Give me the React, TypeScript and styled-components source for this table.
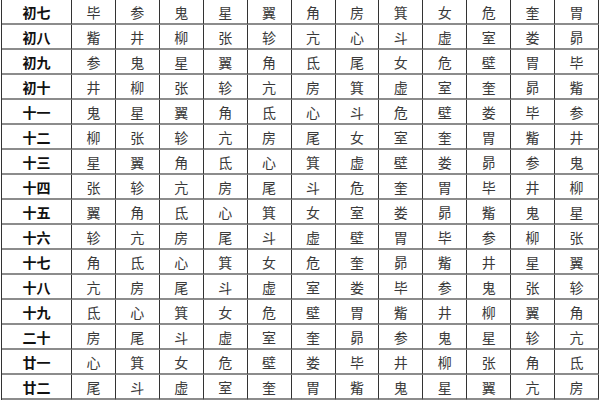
import styled, { createGlobalStyle } from "styled-components";

const GlobalStyle = createGlobalStyle`
  html, body {
    margin: 0;
    padding: 0;
    background: #ffffff;
    overflow: hidden;
  }
`;

const Table = styled.div`
  box-sizing: border-box;
  width: 598px;
  margin-left: 1px;
  border-left: 1px solid #333;
  display: grid;
  grid-template-columns: 70px repeat(12, 1fr);
  grid-auto-rows: 25px;
  font-family: "Noto Sans CJK SC", "DejaVu Sans", sans-serif;
  font-size: 14px;
`;

const Cell = styled.div<{ $label?: boolean }>`
  box-sizing: border-box;
  display: flex;
  align-items: center;
  justify-content: center;
  border-right: 1px solid #333;
  border-bottom: 2px solid #8c8c8c;
  color: ${(p) => (p.$label ? "#111" : "#3a3a3a")};
  font-weight: ${(p) => (p.$label ? 700 : 400)};
  line-height: 1;
`;

const rows: [string, string][] = [
  ["初七", "毕参鬼星翼角房箕女危奎胃"],
  ["初八", "觜井柳张轸亢心斗虚室娄昴"],
  ["初九", "参鬼星翼角氐尾女危壁胃毕"],
  ["初十", "井柳张轸亢房箕虚室奎昴觜"],
  ["十一", "鬼星翼角氐心斗危壁娄毕参"],
  ["十二", "柳张轸亢房尾女室奎胃觜井"],
  ["十三", "星翼角氐心箕虚壁娄昴参鬼"],
  ["十四", "张轸亢房尾斗危奎胃毕井柳"],
  ["十五", "翼角氐心箕女室娄昴觜鬼星"],
  ["十六", "轸亢房尾斗虚壁胃毕参柳张"],
  ["十七", "角氐心箕女危奎昴觜井星翼"],
  ["十八", "亢房尾斗虚室娄毕参鬼张轸"],
  ["十九", "氐心箕女危壁胃觜井柳翼角"],
  ["二十", "房尾斗虚室奎昴参鬼星轸亢"],
  ["廿一", "心箕女危壁娄毕井柳张角氐"],
  ["廿二", "尾斗虚室奎胃觜鬼星翼亢房"],
];

export default function App() {
  return (
    <>
      <GlobalStyle />
      <Table>
        {rows.map(([day, stars]) => [
          <Cell $label key={day}>{day}</Cell>,
          ...Array.from(stars).map((s, i) => (
            <Cell key={day + i}>{s}</Cell>
          )),
        ])}
      </Table>
    </>
  );
}
